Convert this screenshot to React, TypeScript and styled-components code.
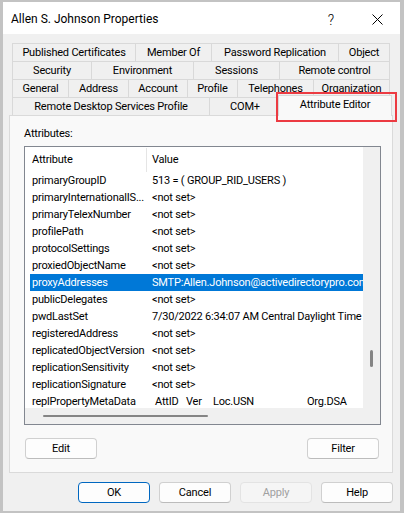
import React from "react";
import styled, { createGlobalStyle, css } from "styled-components";

const GlobalStyle = createGlobalStyle`
  html, body { margin: 0; padding: 0; }
  body {
    background: #c3c3c3;
    font-family: Roboto, "Noto Sans", sans-serif;
    color: #000;
  }
  *, *::before, *::after { box-sizing: border-box; }
`;

const Window = styled.div`
  width: 397px;
  height: 509px;
  margin: 2px 0 0 3px;
  background: #f0f0f0;
  display: flex;
  flex-direction: column;
`;

const TitleBar = styled.div`
  height: 32px;
  background: #ffffff;
  display: flex;
  align-items: center;
  padding-left: 8px;
  flex-shrink: 0;
`;

const TitleText = styled.div`
  flex: 1;
  font-size: 12px;
  padding-top: 1px;
`;

const CaptionButton = styled.div`
  width: 46px;
  height: 32px;
  display: flex;
  align-items: center;
  justify-content: center;
  padding-top: 3px;
  font-size: 14px;
  font-weight: 300;
`;

const Body = styled.div`
  flex: 1;
  display: flex;
  flex-direction: column;
  padding: 9px 0 0 6px;
`;

const TabStrip = styled.div`
  display: flex;
  flex-direction: column;
  margin-left: 3px;
  width: 378px;
`;

const TabRow = styled.div`
  display: flex;
  height: 18px;
  align-items: flex-start;
`;

const Tab = styled.div<{ $w: number; $last?: boolean; $active?: boolean }>`
  position: relative;
  width: ${(p) => p.$w}px;
  height: 18px;
  flex-shrink: 0;
  border-top: 1px solid #d9d9d9;
  border-left: 1px solid #d9d9d9;
  border-right: ${(p) => (p.$last ? "1px solid #d9d9d9" : "none")};
  background: #f0f0f0;
  font-size: 11px;
  letter-spacing: -0.2px;
  line-height: 17px;
  text-align: center;
  white-space: nowrap;
  ${(p) =>
    p.$active &&
    css`
      z-index: 2;
      width: ${p.$w + 4}px;
      height: 21px;
      margin: -2px -2px -1px -2px;
      border-right: 1px solid #d9d9d9;
      background: #f9f9f9;
      line-height: 18px;
    `}
`;

const Callout = styled.div`
  position: absolute;
  left: -3px;
  top: -4px;
  width: 121px;
  height: 30px;
  border: 2px solid #ec3b42;
  pointer-events: none;
  z-index: 3;
`;

const Panel = styled.div`
  width: 384px;
  height: 358px;
  border: 1px solid #dadada;
  background: #f9f9f9;
  display: flex;
  flex-direction: column;
  padding: 10px 11px 13px 14px;
`;

const FieldLabel = styled.div`
  font-size: 11px;
  letter-spacing: -0.2px;
  line-height: 16px;
`;

const ListBox = styled.div`
  margin-top: 4px;
  width: 357px;
  height: 279px;
  border: 1px solid #828790;
  background: #ffffff;
  display: grid;
  grid-template-columns: 338px 17px;
  grid-template-rows: 261px 16px;
`;

const Viewport = styled.div`
  overflow: hidden;
  display: flex;
  flex-direction: column;
  font-size: 11px;
  letter-spacing: -0.2px;
`;

const HeaderRow = styled.div`
  height: 25px;
  flex-shrink: 0;
  display: flex;
  align-items: stretch;
`;

const HeaderCell = styled.div<{ $w?: number }>`
  width: ${(p) => (p.$w ? `${p.$w}px` : "auto")};
  flex: ${(p) => (p.$w ? "0 0 auto" : "1")};
  display: flex;
  align-items: center;
  padding-left: ${(p) => (p.$w ? 7 : 5)}px;
  margin-top: 1px;
  border-right: ${(p) => (p.$w ? "1px solid #e5e5e5" : "none")};
  padding-bottom: 1px;
`;

const Row = styled.div<{ $selected?: boolean }>`
  height: 17px;
  flex-shrink: 0;
  margin-left: 5px;
  display: flex;
  align-items: center;
  white-space: nowrap;
  overflow: hidden;
  line-height: 17px;
  background: ${(p) => (p.$selected ? "#0078d7" : "transparent")};
  color: ${(p) => (p.$selected ? "#ffffff" : "#000000")};
`;

const NameCell = styled.div`
  width: 116px;
  flex-shrink: 0;
  padding-left: 2px;
  overflow: hidden;
`;

const ValueCell = styled.div<{ $indent?: number }>`
  padding-left: ${(p) => p.$indent ?? 6}px;
  display: flex;
`;

const MetaCol = styled.span<{ $w?: number }>`
  display: inline-block;
  width: ${(p) => (p.$w ? `${p.$w}px` : "auto")};
`;

const VScroll = styled.div`
  background: #f0f0f0;
  display: flex;
  flex-direction: column;
  align-items: center;
  padding-top: 203px;
`;

const VThumb = styled.div`
  width: 3px;
  height: 17px;
  border-radius: 2px;
  background: #858585;
`;

const HScroll = styled.div`
  background: #f0f0f0;
  display: flex;
  align-items: center;
  padding-left: 18px;
`;

const HThumb = styled.div`
  width: 165px;
  height: 2px;
  border-radius: 1px;
  background: #858585;
`;

const Corner = styled.div`
  background: #f0f0f0;
`;

const PanelButtons = styled.div`
  margin: 13px 2px 0 1px;
  display: flex;
  justify-content: space-between;
`;

const Button = styled.button<{ $default?: boolean }>`
  width: 72px;
  height: 21px;
  padding: 0;
  border-radius: 4px;
  font-family: Roboto, "Noto Sans", sans-serif;
  font-size: 11px;
  letter-spacing: -0.2px;
  background: #fdfdfd;
  color: #000;
  border: 1px solid #d0d0d0;
  border-bottom-color: #bcbcbc;
  ${(p) =>
    p.$default &&
    css`
      border-color: #0067c0;
    `}
  &:disabled {
    background: #f5f5f5;
    color: #a0a0a0;
    border-color: #e3e3e3;
  }
`;

const Footer = styled.div`
  display: flex;
  justify-content: flex-end;
  gap: 9px;
  padding: 9px 7px 0 0;
`;

type Attr = { name: string; value: string; selected?: boolean };

// Long attribute names are shortened the way the list control shows them.
const attributes: Attr[] = [
  { name: "primaryGroupID", value: "513 = ( GROUP_RID_USERS )" },
  { name: "primaryInternationalIS...", value: "<not set>" },
  { name: "primaryTelexNumber", value: "<not set>" },
  { name: "profilePath", value: "<not set>" },
  { name: "protocolSettings", value: "<not set>" },
  { name: "proxiedObjectName", value: "<not set>" },
  { name: "proxyAddresses", value: "SMTP:Allen.Johnson@activedirectorypro.com", selected: true },
  { name: "publicDelegates", value: "<not set>" },
  { name: "pwdLastSet", value: "7/30/2022 6:34:07 AM Central Daylight Time" },
  { name: "registeredAddress", value: "<not set>" },
  { name: "replicatedObjectVersion", value: "<not set>" },
  { name: "replicationSensitivity", value: "<not set>" },
  { name: "replicationSignature", value: "<not set>" },
];

const tabRows: { label: string; w: number }[][] = [
  [
    { label: "Published Certificates", w: 123 },
    { label: "Member Of", w: 76 },
    { label: "Password Replication", w: 127 },
    { label: "Object", w: 52 },
  ],
  [
    { label: "Security", w: 79 },
    { label: "Environment", w: 102 },
    { label: "Sessions", w: 86 },
    { label: "Remote control", w: 111 },
  ],
  [
    { label: "General", w: 56 },
    { label: "Address", w: 60 },
    { label: "Account", w: 59 },
    { label: "Profile", w: 50 },
    { label: "Telephones", w: 76 },
    { label: "Organization", w: 77 },
  ],
];

const CloseIcon = () => (
  <svg width="11" height="11" viewBox="0 0 11 11">
    <path d="M0.5 0.5 L10.5 10.5 M10.5 0.5 L0.5 10.5" stroke="#000" strokeWidth="1" fill="none" />
  </svg>
);

export default function App() {
  return (
    <>
      <GlobalStyle />
      <Window>
        <TitleBar>
          <TitleText>Allen S. Johnson Properties</TitleText>
          <CaptionButton>?</CaptionButton>
          <CaptionButton>
            <CloseIcon />
          </CaptionButton>
        </TitleBar>
        <Body>
          <TabStrip>
            {tabRows.map((row, i) => (
              <TabRow key={i}>
                {row.map((t, j) => (
                  <Tab key={t.label} $w={t.w} $last={j === row.length - 1}>
                    {t.label}
                  </Tab>
                ))}
              </TabRow>
            ))}
            <TabRow>
              <Tab $w={197}>Remote Desktop Services Profile</Tab>
              <Tab $w={71}>COM+</Tab>
              <Tab $w={110} $last $active>
                Attribute Editor
                <Callout />
              </Tab>
            </TabRow>
          </TabStrip>
          <Panel>
            <FieldLabel>Attributes:</FieldLabel>
            <ListBox>
              <Viewport>
                <HeaderRow>
                  <HeaderCell $w={122}>Attribute</HeaderCell>
                  <HeaderCell>Value</HeaderCell>
                </HeaderRow>
                {attributes.map((a) => (
                  <Row key={a.name} $selected={a.selected}>
                    <NameCell>{a.name}</NameCell>
                    <ValueCell>{a.value}</ValueCell>
                  </Row>
                ))}
                <Row>
                  <NameCell>replPropertyMetaData</NameCell>
                  <ValueCell $indent={9}>
                    <MetaCol $w={31}>AttID</MetaCol>
                    <MetaCol $w={27}>Ver</MetaCol>
                    <MetaCol $w={94}>Loc.USN</MetaCol>
                    <MetaCol>Org.DSA</MetaCol>
                  </ValueCell>
                </Row>
              </Viewport>
              <VScroll>
                <VThumb />
              </VScroll>
              <HScroll>
                <HThumb />
              </HScroll>
              <Corner />
            </ListBox>
            <PanelButtons>
              <Button>Edit</Button>
              <Button>Filter</Button>
            </PanelButtons>
          </Panel>
          <Footer>
            <Button $default>OK</Button>
            <Button>Cancel</Button>
            <Button disabled>Apply</Button>
            <Button>Help</Button>
          </Footer>
        </Body>
      </Window>
    </>
  );
}
